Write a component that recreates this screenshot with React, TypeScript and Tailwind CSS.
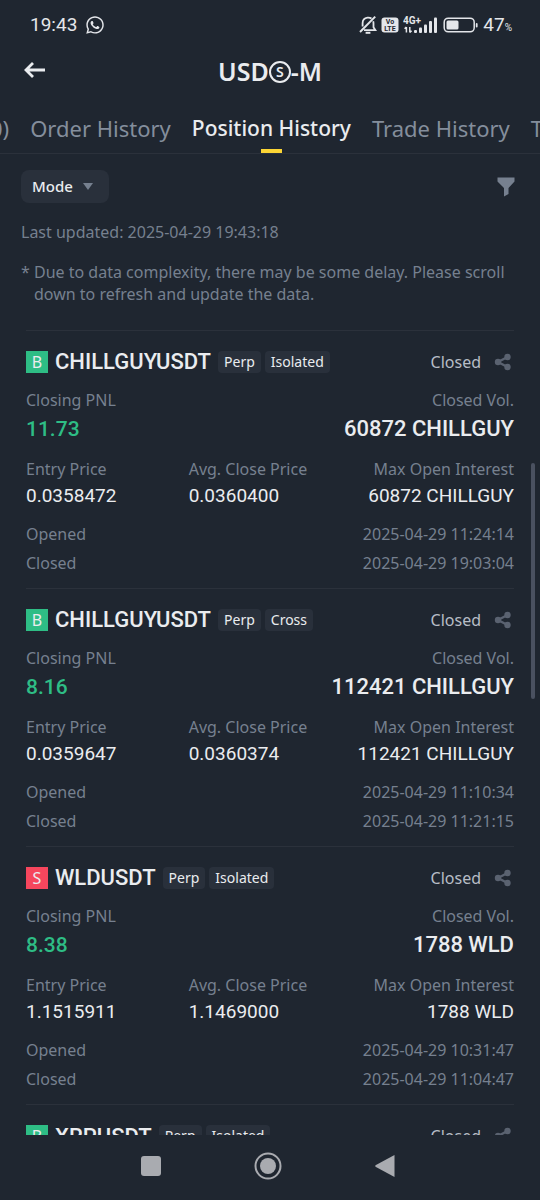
import React from 'react';
import { FaWhatsapp } from 'react-icons/fa';

interface Position {
  symbol: string;
  side: 'B' | 'S';
  margin: 'Isolated' | 'Cross';
  pnl: string;
  volume: string;
  entryPrice: string;
  closePrice: string;
  openInterest: string;
  opened: string;
  closed: string;
}

// Mock positions - in a real app, these would come from the API
const positions: Position[] = [
  {
    symbol: 'CHILLGUYUSDT',
    side: 'B',
    margin: 'Isolated',
    pnl: '11.73',
    volume: '60872 CHILLGUY',
    entryPrice: '0.0358472',
    closePrice: '0.0360400',
    openInterest: '60872 CHILLGUY',
    opened: '2025-04-29 11:24:14',
    closed: '2025-04-29 19:03:04',
  },
  {
    symbol: 'CHILLGUYUSDT',
    side: 'B',
    margin: 'Cross',
    pnl: '8.16',
    volume: '112421 CHILLGUY',
    entryPrice: '0.0359647',
    closePrice: '0.0360374',
    openInterest: '112421 CHILLGUY',
    opened: '2025-04-29 11:10:34',
    closed: '2025-04-29 11:21:15',
  },
  {
    symbol: 'WLDUSDT',
    side: 'S',
    margin: 'Isolated',
    pnl: '8.38',
    volume: '1788 WLD',
    entryPrice: '1.1515911',
    closePrice: '1.1469000',
    openInterest: '1788 WLD',
    opened: '2025-04-29 10:31:47',
    closed: '2025-04-29 11:04:47',
  },
];

const SilentIcon: React.FC = () => (
  <svg viewBox="0 0 18 20" className="w-[18px] h-5" fill="none" stroke="currentColor" strokeWidth="1.8">
    <path d="M3.6 11.5V8.2C3.6 5 5.6 3 8.5 2.6C10 2.4 11.4 2.8 12.5 3.6" />
    <path d="M14.2 6.2C14.4 7 14.5 7.6 14.5 8.5V12.2L16.4 15.2H5" />
    <path d="M1 17L16.2 1.6" strokeWidth="2" />
    <path d="M6.6 17.8H11.4" strokeWidth="2" />
  </svg>
);

const VolteIcon: React.FC = () => (
  <svg viewBox="0 0 18 16" className="w-[18px] h-4">
    <rect x="0.5" y="0.5" width="17" height="15" rx="3" fill="#e4e6ea" />
    <text x="9" y="7.4" textAnchor="middle" fontSize="7" fontWeight="700" fill="#1f2630">Vo</text>
    <text x="9" y="14" textAnchor="middle" fontSize="7" fontWeight="700" fill="#1f2630">LTE</text>
  </svg>
);

const SignalIcon: React.FC = () => (
  <svg viewBox="0 0 36 18" className="w-9 h-[18px]" fill="currentColor">
    <text x="0" y="8" fontSize="10" fontWeight="700">4G+</text>
    <path d="M3.4 11v5.5M1.6 12.8L3.4 11M6.8 11v5.5M8.6 14.7l-1.8 1.8" stroke="currentColor" strokeWidth="1.5" fill="none" />
    <rect x="11" y="14" width="3" height="3" rx="1" />
    <rect x="16" y="11.5" width="3" height="5.5" rx="1" />
    <rect x="21" y="8.5" width="3" height="8.5" rx="1" />
    <rect x="26" y="5" width="3" height="12" rx="1" />
    <rect x="31" y="1.5" width="3" height="15.5" rx="1" />
  </svg>
);

const BatteryIcon: React.FC = () => (
  <svg viewBox="0 0 36 16" className="w-9 h-4" fill="currentColor">
    <rect x="1.2" y="1.2" width="30" height="13.6" rx="4" fill="none" stroke="currentColor" strokeWidth="1.5" />
    <rect x="3.5" y="3.5" width="12" height="9" rx="1.5" />
    <rect x="32.8" y="6" width="1.8" height="4.5" rx="0.9" />
  </svg>
);

const ShareIcon: React.FC = () => (
  <svg viewBox="0 0 18 18" className="w-[18px] h-[18px]" fill="currentColor">
    <path d="M13.5 4L4 9L13.5 14" fill="none" stroke="currentColor" strokeWidth="2.4" />
    <circle cx="13.5" cy="4" r="3.2" />
    <circle cx="4" cy="9" r="3.2" />
    <circle cx="13.5" cy="14" r="3.2" />
  </svg>
);

const StatusBar: React.FC = () => (
  <div className="flex h-[50px] shrink-0 items-center justify-between pl-[30px] pr-7 font-[Roboto,sans-serif] text-[19px] text-[#e4e6ea]">
    <div className="flex items-center gap-2">
      <span>19:43</span>
      <FaWhatsapp className="w-5 h-5" />
    </div>
    <div className="flex items-center">
      <SilentIcon />
      <span className="ml-1"><VolteIcon /></span>
      <span className="ml-1"><SignalIcon /></span>
      <span className="ml-1"><BatteryIcon /></span>
      <span className="ml-1">47<span className="text-[10px]">%</span></span>
    </div>
  </div>
);

const Header: React.FC = () => (
  <header className="grid h-11 shrink-0 grid-cols-[1fr_auto_1fr] items-center px-6 text-[#eaecef]">
    <button aria-label="Back" className="w-6 pb-1">
      <svg viewBox="0 0 22 18" className="w-[22px] h-[18px]" fill="none" stroke="currentColor" strokeWidth="2.8">
        <path d="M21 9H2.5M9 2L2 9L9 16" />
      </svg>
    </button>
    <h1 className="flex items-center text-[25px] font-semibold">
      USD
      <span className="flex h-[22px] w-[22px] items-center justify-center rounded-full border-2 border-current text-sm">S</span>
      -M
    </h1>
  </header>
);

const Tabs: React.FC = () => (
  <nav className="flex h-[60px] shrink-0 gap-[21px] overflow-hidden border-b border-[#2b313b] pt-5 text-[22px] leading-7 whitespace-nowrap text-[#848e9c]">
    <a href="#orders" className="flex w-0 flex-1 justify-end">0)</a>
    <a href="#order-history">Order History</a>
    <a href="#position-history" className="flex flex-col items-center justify-between text-[21px] font-medium text-[#eaecef]">
      Position History
      <span className="h-1 w-[21px] bg-[#fcd535]" />
    </a>
    <a href="#trade-history">Trade History</a>
    <a href="#transactions" className="w-0 flex-1">T</a>
  </nav>
);

const Toolbar: React.FC = () => (
  <div className="px-[21px] pt-4 text-base text-[#76808f]">
    <div className="flex items-center justify-between">
      <button className="flex h-[33px] items-center gap-[10px] rounded-lg bg-[#29303b] pl-[11px] pr-4 text-[15px] font-medium text-[#eaecef]">
        Mode
        <svg viewBox="0 0 10 7" className="w-[10px] h-[7px]" fill="#76808f">
          <path d="M0 0H10L5 7Z" />
        </svg>
      </button>
      <button aria-label="Filter" className="pr-1">
        <svg viewBox="0 0 18 20" className="w-[18px] h-5" fill="#76808f">
          <path d="M0.5 0.5H17.5V4.5L11.5 11V17L7 19.5V11L0.5 4.5Z" />
        </svg>
      </button>
    </div>
    <p className="mt-[18px] leading-[22px]">Last updated: 2025-04-29 19:43:18</p>
    <div className="mt-[18px] flex leading-[22px]">
      <span className="w-[13px] shrink-0">*</span>
      <p>Due to data complexity, there may be some delay. Please scroll down to refresh and update the data.</p>
    </div>
  </div>
);

const CardHeader: React.FC<Pick<Position, 'symbol' | 'side' | 'margin'>> = ({ symbol, side, margin }) => (
  <div className="flex h-[22px] items-center">
    <span className={`flex h-[22px] w-[22px] items-center justify-center text-base text-[#eaecef] ${side === 'B' ? 'bg-[#2ebd85]' : 'bg-[#f6465d]'}`}>
      {side}
    </span>
    <h2 className="ml-[7px] font-[Roboto,sans-serif] text-[22px] font-medium text-[#eaecef]">{symbol}</h2>
    <span className="ml-[7px] rounded-sm bg-[#29303b] px-[6px] text-sm leading-[22px] text-[#eaecef]">Perp</span>
    <span className="ml-1 rounded-sm bg-[#29303b] px-[6px] text-sm leading-[22px] text-[#eaecef]">{margin}</span>
    <span className="ml-auto text-base text-[#b7bdc6]">Closed</span>
    <button aria-label="Share" className="ml-[13px] pr-[2px] text-[#5a6270]"><ShareIcon /></button>
  </div>
);

const PositionCard: React.FC<{ position: Position }> = ({ position }) => (
  <article className="border-t border-[#2b313b] pt-5 pb-[14px] text-base leading-[22px] text-[#76808f]">
    <CardHeader symbol={position.symbol} side={position.side} margin={position.margin} />

    <dl className="mt-4 flex justify-between">
      <div>
        <dt>Closing PNL</dt>
        <dd className="font-[Roboto,sans-serif] text-[21px] leading-9 font-medium text-[#2ebd85]">{position.pnl}</dd>
      </div>
      <div className="text-right">
        <dt>Closed Vol.</dt>
        <dd className="font-[Roboto,sans-serif] text-[22px] leading-9 font-medium text-[#eaecef]">{position.volume}</dd>
      </div>
    </dl>

    <dl className="mt-[11px] grid grid-cols-3">
      <div>
        <dt>Entry Price</dt>
        <dd className="font-[Roboto,sans-serif] text-[19px] leading-8 text-[#eaecef]">{position.entryPrice}</dd>
      </div>
      <div>
        <dt>Avg. Close Price</dt>
        <dd className="font-[Roboto,sans-serif] text-[19px] leading-8 text-[#eaecef]">{position.closePrice}</dd>
      </div>
      <div className="text-right">
        <dt>Max Open Interest</dt>
        <dd className="font-[Roboto,sans-serif] text-[19px] leading-8 text-[#eaecef]">{position.openInterest}</dd>
      </div>
    </dl>

    <dl className="mt-[11px] grid grid-cols-2 gap-y-[7px]">
      <dt>Opened</dt>
      <dd className="text-right">{position.opened}</dd>
      <dt>Closed</dt>
      <dd className="text-right">{position.closed}</dd>
    </dl>
  </article>
);

const NavigationBar: React.FC = () => (
  <footer className="flex h-[65px] shrink-0 items-center justify-center gap-[93px] pr-1 pb-1 text-[#a9abb0]">
    <button aria-label="Recents" className="h-5 w-5 rounded-[3px] bg-current" />
    <button aria-label="Home">
      <svg viewBox="0 0 28 28" className="h-7 w-7">
        <circle cx="14" cy="14" r="12.5" fill="none" stroke="currentColor" strokeWidth="2" />
        <circle cx="14" cy="14" r="8" fill="currentColor" />
      </svg>
    </button>
    <button aria-label="Back">
      <svg viewBox="0 0 20 24" className="h-6 w-5" fill="currentColor">
        <path d="M19.5 1V23L0.5 12.7Q0 12 0.5 11.3Z" />
      </svg>
    </button>
  </footer>
);

const App: React.FC = () => {
  return (
    <div className="flex h-screen flex-col overflow-hidden bg-[#1f2630] font-['Noto_Sans',sans-serif]">
      <StatusBar />
      <Header />
      <Tabs />
      <main className="relative min-h-0 flex-1 overflow-hidden">
        <Toolbar />
        <section className="mt-[25px] px-[26px]">
          {positions.map((position) => (
            <PositionCard key={position.opened} position={position} />
          ))}
          <article className="border-t border-[#2b313b] pt-5">
            <CardHeader symbol="XRPUSDT" side="B" margin="Isolated" />
          </article>
        </section>
        {/* Scroll indicator */}
        <div className="absolute top-[309px] right-[5px] h-[236px] w-1 rounded-full bg-[#4a5160]" />
      </main>
      <NavigationBar />
    </div>
  );
};

export default App;
